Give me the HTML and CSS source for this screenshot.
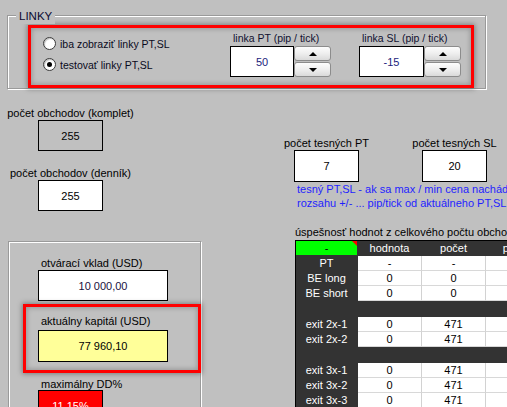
FILE: index.html
```html
<!DOCTYPE html>
<html lang="sk">
<head>
<meta charset="utf-8">
<title>Linky</title>
<link rel="stylesheet" href="styles.css">
</head>
<body>
<div class="form">
  <div class="group">
    <span class="legend">LINKY</span>
    <div class="hl hl-top">
      <div class="radios">
        <div class="radio"><span class="dot"></span><span>iba zobraziť linky PT,SL</span></div>
        <div class="radio checked"><span class="dot"></span><span>testovať linky PT,SL</span></div>
      </div>
      <div class="spin-field">
        <div class="spin-label">linka PT (pip / tick)</div>
        <div class="spin-row">
          <div class="spin-input">50</div>
          <div class="spin-btns">
            <div class="sbtn"><span class="arr up"></span></div>
            <div class="sbtn"><span class="arr down"></span></div>
          </div>
        </div>
      </div>
      <div class="spin-field sl">
        <div class="spin-label">linka SL (pip / tick)</div>
        <div class="spin-row">
          <div class="spin-input wide">-15</div>
          <div class="spin-btns">
            <div class="sbtn"><span class="arr up"></span></div>
            <div class="sbtn"><span class="arr down"></span></div>
          </div>
        </div>
      </div>
    </div>
  </div>

  <div class="lower">
    <div class="left">
      <div class="unit first">
        <div class="lbl">počet obchodov (komplet)</div>
        <div class="val gray">255</div>
      </div>
      <div class="unit second">
        <div class="lbl">počet obchodov (denník)</div>
        <div class="val">255</div>
      </div>
      <div class="panel">
        <div class="plbl top">otvárací vklad (USD)</div>
        <div class="val long navy">10 000,00</div>
        <div class="hl hl-cap">
          <div class="plbl in">aktuálny kapitál (USD)</div>
          <div class="val long yellow">77 960,10</div>
        </div>
        <div class="plbl dd">maximálny DD%</div>
        <div class="val red">11,15%</div>
      </div>
    </div>

    <div class="right">
      <div class="pair">
        <div class="unit2">
          <div class="lbl">počet tesných PT</div>
          <div class="val tall">7</div>
        </div>
        <div class="unit2">
          <div class="lbl">počet tesných SL</div>
          <div class="val tall">20</div>
        </div>
      </div>
      <div class="note">
        <div>tesný PT,SL - ak sa max / min cena nachádza v</div>
        <div>rozsahu +/- ... pip/tick od aktuálneho PT,SL</div>
      </div>
      <div class="ttl">úspešnosť hodnot z celkového počtu obchodov</div>
      <table class="grid">
        <colgroup>
          <col class="c1"><col class="c2"><col class="c2"><col class="c2">
        </colgroup>
        <tr class="head"><td class="green">-</td><td>hodnota</td><td>počet</td><td>podiel</td></tr>
        <tr><td class="k">PT</td><td class="w">-</td><td class="w">-</td><td class="w"></td></tr>
        <tr><td class="k">BE long</td><td class="w">0</td><td class="w">0</td><td class="w"></td></tr>
        <tr><td class="k">BE short</td><td class="w">0</td><td class="w">0</td><td class="w"></td></tr>
        <tr class="sep"><td></td><td></td><td></td><td></td></tr>
        <tr><td class="k">exit 2x-1</td><td class="w">0</td><td class="w">471</td><td class="w"></td></tr>
        <tr><td class="k">exit 2x-2</td><td class="w">0</td><td class="w">471</td><td class="w"></td></tr>
        <tr class="sep"><td></td><td></td><td></td><td></td></tr>
        <tr><td class="k">exit 3x-1</td><td class="w">0</td><td class="w">471</td><td class="w"></td></tr>
        <tr><td class="k">exit 3x-2</td><td class="w">0</td><td class="w">471</td><td class="w"></td></tr>
        <tr><td class="k">exit 3x-3</td><td class="w">0</td><td class="w">471</td><td class="w"></td></tr>
      </table>
    </div>
  </div>
</div>
</body>
</html>
```

FILE: styles.css
```css
html, body {
  margin: 0;
  padding: 0;
  overflow: hidden;
}
body {
  width: 507px;
  height: 407px;
  background: #c0c0c0;
  font-family: "Liberation Sans", Arial, sans-serif;
  font-size: 11px;
  color: #000;
}
.form {
  width: 507px;
  height: 407px;
  overflow: hidden;
}

/* group box */
.group {
  position: relative;
  margin: 15px 0 0 7px;
  width: 479px;
  height: 74px;
  box-sizing: border-box;
  border: 1px solid #9a9a9a;
  box-shadow: 1px 1px 0 #fff, inset 1px 1px 0 #fff;
  padding: 9px 0 0 20px;
}
.legend {
  position: absolute;
  left: 8px;
  top: -8px;
  padding: 0 3px;
  background: #c0c0c0;
  font-size: 11.5px;
  line-height: 16px;
  color: #0a0a30;
}

/* red highlight frame */
.hl {
  border: 3px solid #ff0000;
  box-sizing: border-box;
  box-shadow: 0 0 5px 1px rgba(0, 0, 0, 0.35), inset 0 0 5px 1px rgba(0, 0, 0, 0.22);
}
.hl-top {
  width: 446px;
  height: 63px;
  display: flex;
}

/* radios */
.radios {
  width: 199px;
  padding: 5px 0 0 12px;
  box-sizing: border-box;
}
.radio {
  display: flex;
  align-items: center;
  gap: 4px;
  height: 21px;
  font-size: 10.5px;
  color: #0a0a20;
}
.dot {
  position: relative;
  width: 13px;
  height: 13px;
  box-sizing: border-box;
  border-radius: 50%;
  border: 1px solid #3a3a3a;
  background: #fff;
  box-shadow: inset 1px 1px 1px rgba(0, 0, 0, 0.25);
}
.checked .dot::after {
  content: "";
  position: absolute;
  left: 3px;
  top: 3px;
  width: 5px;
  height: 5px;
  border-radius: 50%;
  background: #000;
}

/* spinners */
.spin-field {
  padding-top: 4px;
}
.spin-field.sl {
  margin-left: 28px;
}
.spin-label {
  padding-left: 3px;
  line-height: 13px;
  margin-bottom: 1px;
  font-size: 10.5px;
  color: #101030;
}
.spin-row {
  display: flex;
}
.spin-input {
  width: 64px;
  height: 31px;
  box-sizing: border-box;
  border: 1px solid #000;
  background: #fff;
  display: flex;
  align-items: center;
  justify-content: center;
  color: #1c1c7c;
  font-size: 11px;
}
.spin-input.wide {
  width: 65px;
}
.spin-btns {
  display: flex;
  flex-direction: column;
  gap: 1px;
}
.sbtn {
  width: 37px;
  height: 15px;
  box-sizing: border-box;
  border: 1px solid #8c8c8c;
  border-radius: 3px;
  background: linear-gradient(#fdfdfd, #eeeeee 50%, #dadada);
  display: flex;
  align-items: center;
  justify-content: center;
}
.arr {
  width: 0;
  height: 0;
  border-left: 4px solid transparent;
  border-right: 4px solid transparent;
}
.arr.up {
  border-bottom: 4px solid #000;
}
.arr.down {
  border-top: 4px solid #000;
}

/* lower area */
.lower {
  display: grid;
  grid-template-columns: 276px 1fr;
}
.lbl {
  line-height: 13px;
  white-space: nowrap;
}
.val {
  width: 65px;
  height: 31px;
  box-sizing: border-box;
  border: 1px solid #000;
  background: #fff;
  display: flex;
  align-items: center;
  justify-content: center;
  font-size: 11px;
}
.val.gray {
  background: #c0c0c0;
}
.val.tall {
  height: 32px;
}
.unit {
  width: 141px;
  text-align: center;
}
.unit .val {
  margin: 0 auto;
}
.unit.first {
  margin-top: 18px;
}
.unit.second {
  margin-top: 16px;
}

.panel {
  margin: 30px 0 0 8px;
  width: 193px;
  height: 200px;
  box-sizing: border-box;
  border: 1px solid #9a9a9a;
  box-shadow: 1px 1px 0 #fff, inset 1px 1px 0 #fff;
}
.plbl {
  line-height: 13px;
  padding-left: 32px;
  white-space: nowrap;
}
.plbl.top {
  margin-top: 15px;
}
.val.long {
  width: 130px;
  margin-left: 29px;
}
.val.navy {
  color: #1a1040;
}
.hl-cap {
  margin: 3px 0 0 14px;
  width: 178px;
  height: 69px;
}
.plbl.in {
  padding: 8px 0 0 15px;
}
.val.yellow {
  margin: 2px 0 0 12px;
  height: 32px;
  background: #ffff99;
}
.plbl.dd {
  margin-top: 5px;
  line-height: 12px;
}
.val.red {
  margin-left: 29px;
  background: #ff0000;
  color: #fff;
}

/* right column */
.pair {
  display: flex;
  gap: 27px;
  margin-top: 48px;
}
.unit2 {
  width: 101px;
  text-align: center;
}
.unit2 .val {
  margin: 0 auto;
}
.note {
  padding-left: 21px;
  line-height: 14px;
  color: #1f1fff;
  white-space: nowrap;
}
.ttl {
  margin-top: 16px;
  padding-left: 19px;
  line-height: 13px;
  white-space: nowrap;
}

.grid {
  margin: 1px 0 0 19px;
  border-collapse: separate;
  border-spacing: 0;
  table-layout: fixed;
  width: 256px;
  border: 1px solid #000;
  background: #333;
  font-size: 11px;
}
.c1 {
  width: 62px;
}
.c2 {
  width: 64px;
}
.grid td {
  box-sizing: border-box;
  height: 15px;
  padding: 0;
  line-height: 14px;
  text-align: center;
  white-space: nowrap;
  overflow: hidden;
  border-right: 1px solid #333;
  border-bottom: 1px solid #333;
  color: #fff;
}
.grid td.w {
  background: #fff;
  color: #000;
  border-right-color: #d2d2d2;
  border-bottom-color: #d8d8d8;
}
.grid tr.sep td {
  height: 16px;
}
.grid td.green {
  position: relative;
  background: #00ff00;
  color: #000;
}
.grid td.green::after {
  content: "";
  position: absolute;
  right: 0;
  top: 0;
  width: 0;
  height: 0;
  border-left: 5px solid transparent;
  border-top: 5px solid #ff0000;
}
```
